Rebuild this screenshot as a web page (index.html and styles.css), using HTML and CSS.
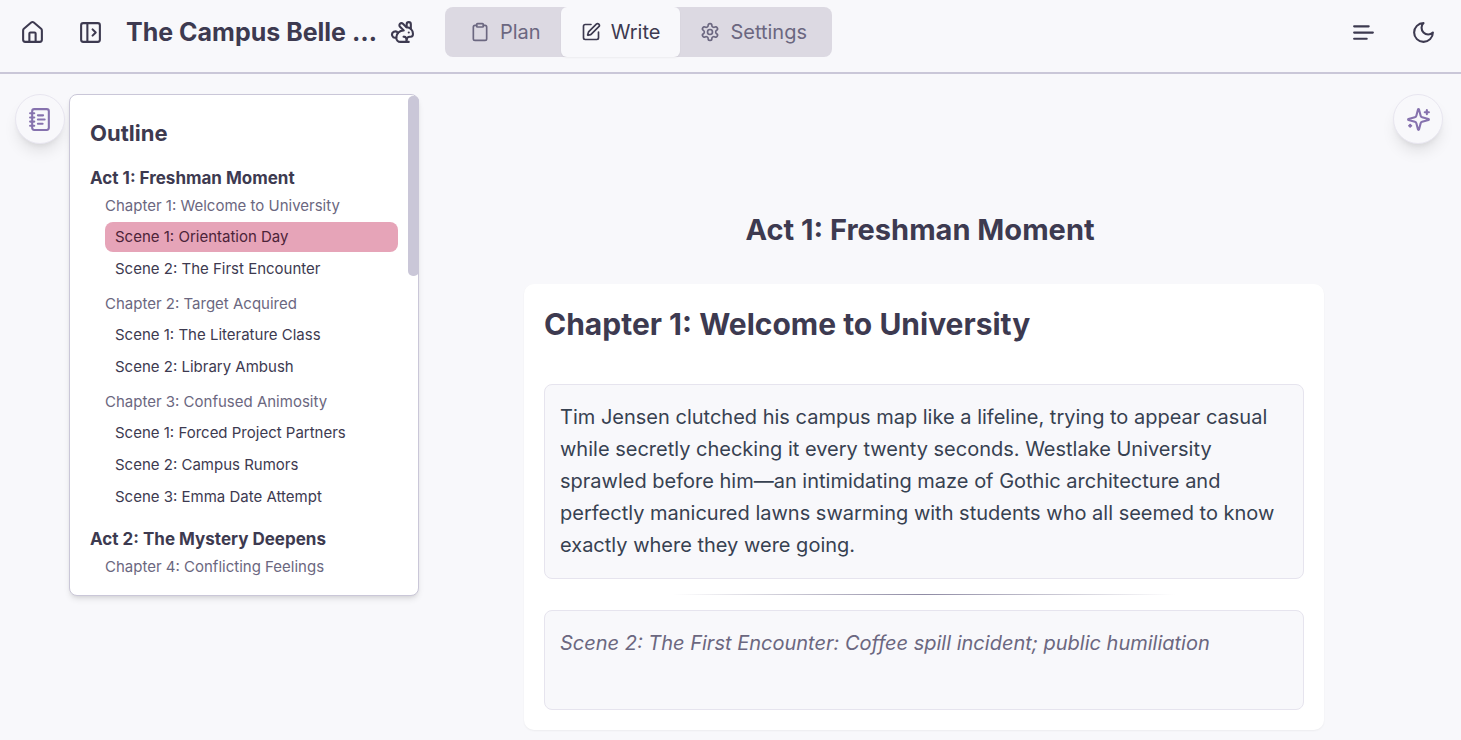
FILE: index.html
```html
<!DOCTYPE html>
<html lang="en">
<head>
<meta charset="utf-8">
<meta name="viewport" content="width=device-width, initial-scale=1">
<title>The Campus Belle</title>
<link rel="stylesheet" href="styles.css">
</head>
<body>
<header class="topbar">
  <div class="topbar-left">
    <button class="icon-btn" type="button" aria-label="Home">
      <svg class="icon" viewBox="0 0 24 24"><path d="M15 21v-8a1 1 0 0 0-1-1h-4a1 1 0 0 0-1 1v8"/><path d="M3 10a2 2 0 0 1 .709-1.528l7-5.999a2 2 0 0 1 2.582 0l7 5.999A2 2 0 0 1 21 10v9a2 2 0 0 1-2 2H5a2 2 0 0 1-2-2z"/></svg>
    </button>
    <button class="icon-btn" type="button" aria-label="Open sidebar">
      <svg class="icon" viewBox="0 0 24 24"><rect width="18" height="18" x="3" y="3" rx="2"/><path d="M9 3v18"/><path d="m14 9 3 3-3 3"/></svg>
    </button>
    <h1 class="story-title">The Campus Belle …</h1>
  </div>
  <button class="icon-btn rabbit" type="button" aria-label="Story assistant">
    <svg class="icon" viewBox="0 0 24 24"><path d="M13 16a3 3 0 0 1 2.24 5"/><path d="M18 12h.01"/><path d="M18 21h-8a4 4 0 0 1-4-4 7 7 0 0 1 7-7h.2L9.6 6.4a1 1 0 1 1 2.8-2.8L15.8 7h.2c3.3 0 6 2.7 6 6v1a2 2 0 0 1-2 2h-1a3 3 0 0 0-3 3"/><path d="M20 8.54V4a2 2 0 1 0-4 0v3"/><path d="M7.612 12.524a3 3 0 1 0-1.6 4.3"/></svg>
  </button>
  <nav class="tabs" aria-label="Views">
    <button class="tab" type="button">
      <svg class="icon icon-sm" viewBox="0 0 24 24"><rect width="8" height="4" x="8" y="2" rx="1"/><path d="M16 4h2a2 2 0 0 1 2 2v14a2 2 0 0 1-2 2H6a2 2 0 0 1-2-2V6a2 2 0 0 1 2-2h2"/></svg>
      Plan
    </button>
    <button class="tab tab-active" type="button" aria-current="page">
      <svg class="icon icon-sm" viewBox="0 0 24 24"><path d="M12 3H5a2 2 0 0 0-2 2v14a2 2 0 0 0 2 2h14a2 2 0 0 0 2-2v-7"/><path d="M18.375 2.625a1 1 0 0 1 3 3l-9.013 9.014a2 2 0 0 1-.853.505l-2.873.84a.5.5 0 0 1-.62-.62l.84-2.873a2 2 0 0 1 .506-.852z"/></svg>
      Write
    </button>
    <button class="tab" type="button">
      <svg class="icon icon-sm" viewBox="0 0 24 24"><path d="M12.22 2h-.44a2 2 0 0 0-2 2v.18a2 2 0 0 1-1 1.73l-.43.25a2 2 0 0 1-2 0l-.15-.08a2 2 0 0 0-2.73.73l-.22.38a2 2 0 0 0 .73 2.73l.15.1a2 2 0 0 1 1 1.72v.51a2 2 0 0 1-1 1.74l-.15.09a2 2 0 0 0-.73 2.73l.22.38a2 2 0 0 0 2.73.73l.15-.08a2 2 0 0 1 2 0l.43.25a2 2 0 0 1 1 1.73V20a2 2 0 0 0 2 2h.44a2 2 0 0 0 2-2v-.18a2 2 0 0 1 1-1.73l.43-.25a2 2 0 0 1 2 0l.15.08a2 2 0 0 0 2.73-.73l.22-.39a2 2 0 0 0-.73-2.73l-.15-.08a2 2 0 0 1-1-1.74v-.5a2 2 0 0 1 1-1.74l.15-.09a2 2 0 0 0 .73-2.73l-.22-.38a2 2 0 0 0-2.73-.73l-.15.08a2 2 0 0 1-2 0l-.43-.25a2 2 0 0 1-1-1.73V4a2 2 0 0 0-2-2z"/><circle cx="12" cy="12" r="3"/></svg>
      Settings
    </button>
  </nav>
  <div class="topbar-right">
    <button class="icon-btn" type="button" aria-label="Text options">
      <svg class="icon" viewBox="0 0 24 24"><path d="M17 6.1H3"/><path d="M21 12.1H3"/><path d="M15.1 18H3"/></svg>
    </button>
    <button class="icon-btn" type="button" aria-label="Dark mode">
      <svg class="icon" viewBox="0 0 24 24"><path d="M12 3a6 6 0 0 0 9 9 9 9 0 1 1-9-9Z"/></svg>
    </button>
  </div>
</header>

<main class="workspace">
  <button class="round-btn" type="button" aria-label="Toggle outline">
    <svg class="icon" viewBox="0 0 24 24"><path d="M2 6h4"/><path d="M2 10h4"/><path d="M2 14h4"/><path d="M2 18h4"/><rect width="16" height="20" x="4" y="2" rx="2"/><path d="M9.5 8h5"/><path d="M9.5 12H16"/><path d="M9.5 16H14"/></svg>
  </button>

  <aside class="outline">
    <span class="scroll-thumb"></span>
    <h2 class="outline-title">Outline</h2>
    <section class="outline-act">
      <a class="act-link" href="#act-1">Act 1: Freshman Moment</a>
      <div class="outline-chapter">
        <a class="chapter-link" href="#chapter-1">Chapter 1: Welcome to University</a>
        <a class="scene-link scene-active" href="#scene-1">Scene 1: Orientation Day</a>
        <a class="scene-link" href="#scene-2">Scene 2: The First Encounter</a>
      </div>
      <div class="outline-chapter">
        <a class="chapter-link" href="#chapter-2">Chapter 2: Target Acquired</a>
        <a class="scene-link" href="#scene-3">Scene 1: The Literature Class</a>
        <a class="scene-link" href="#scene-4">Scene 2: Library Ambush</a>
      </div>
      <div class="outline-chapter">
        <a class="chapter-link" href="#chapter-3">Chapter 3: Confused Animosity</a>
        <a class="scene-link" href="#scene-5">Scene 1: Forced Project Partners</a>
        <a class="scene-link" href="#scene-6">Scene 2: Campus Rumors</a>
        <a class="scene-link" href="#scene-7">Scene 3: Emma Date Attempt</a>
      </div>
    </section>
    <section class="outline-act">
      <a class="act-link" href="#act-2">Act 2: The Mystery Deepens</a>
      <div class="outline-chapter">
        <a class="chapter-link" href="#chapter-4">Chapter 4: Conflicting Feelings</a>
      </div>
    </section>
  </aside>

  <div class="editor">
    <h2 class="act-heading" id="act-1">Act 1: Freshman Moment</h2>
    <article class="chapter-card">
      <h3 class="chapter-heading" id="chapter-1">Chapter 1: Welcome to University</h3>
      <div class="scene" id="scene-1" role="textbox" aria-multiline="true" aria-label="Scene 1" contenteditable="true" spellcheck="false">Tim Jensen clutched his campus map like a lifeline, trying to appear casual while secretly checking it every twenty seconds. Westlake University sprawled before him—an intimidating maze of Gothic architecture and perfectly manicured lawns swarming with students who all seemed to know exactly where they were going.</div>
      <hr class="divider">
      <div class="scene scene-empty" id="scene-2" role="textbox" aria-multiline="true" aria-label="Scene 2" contenteditable="true" spellcheck="false">Scene 2: The First Encounter: Coffee spill incident; public humiliation</div>
    </article>
  </div>

  <button class="round-btn" type="button" aria-label="AI tools">
    <svg class="icon" viewBox="0 0 24 24"><path d="M9.937 15.5A2 2 0 0 0 8.5 14.063l-6.135-1.582a.5.5 0 0 1 0-.962L8.5 9.936A2 2 0 0 0 9.937 8.5l1.582-6.135a.5.5 0 0 1 .963 0L14.063 8.5A2 2 0 0 0 15.5 9.937l6.135 1.581a.5.5 0 0 1 0 .964L15.5 14.063a2 2 0 0 0-1.437 1.437l-1.582 6.135a.5.5 0 0 1-.963 0z"/><path d="M20 3v4"/><path d="M22 5h-4"/><path d="M4 17v2"/><path d="M5 18H3"/></svg>
  </button>
</main>
</body>
</html>
```
FILE: styles.css
```css
:root {
  --bg: #f8f8fb;
  --ink: #3d3a50;
  --muted: #6b6780;
  --line: #cac7d8;
  --accent: #8672ae;
}

* {
  box-sizing: border-box;
}

body {
  margin: 0;
  min-height: 100vh;
  background: var(--bg);
  color: var(--ink);
  font-family: Inter, "Liberation Sans", sans-serif;
  font-size: 20px;
}

h1,
h2,
h3 {
  margin: 0;
  font-weight: 700;
}

button {
  border: 0;
  background: none;
  color: inherit;
  font: inherit;
  padding: 0;
  cursor: pointer;
}

a {
  color: inherit;
  text-decoration: none;
}

.icon {
  display: block;
  flex: none;
  width: 25px;
  height: 25px;
  fill: none;
  stroke: currentColor;
  stroke-width: 2;
  stroke-linecap: round;
  stroke-linejoin: round;
}

.icon-sm {
  width: 20px;
  height: 20px;
}

/* Top bar */
.topbar {
  display: flex;
  align-items: center;
  padding: 7px 15px 15px 10px;
  border-bottom: 2px solid var(--line);
}

.topbar-left {
  display: flex;
  align-items: center;
  gap: 13px;
}

.icon-btn {
  display: grid;
  place-items: center;
  width: 45px;
  height: 45px;
  border-radius: 8px;
}

.story-title {
  width: 256px;
  overflow: hidden;
  font-size: 25px;
  line-height: 35px;
  white-space: nowrap;
  text-overflow: ellipsis;
}

.rabbit {
  width: 25px;
  margin: 0 30px 0 8px;
}

.tabs {
  display: flex;
  padding: 0 5px;
  border-radius: 8px;
  background: #dcd9e2;
  color: var(--muted);
}

.tab {
  display: flex;
  align-items: center;
  gap: 10px;
  height: 50px;
  padding: 0 20px;
  border-radius: 6px;
}

.tab-active {
  background: var(--bg);
  color: var(--ink);
  box-shadow: 0 1px 2px rgba(0, 0, 0, 0.05);
}

.topbar-right {
  display: flex;
  gap: 15px;
  margin-left: auto;
}

/* Workspace */
.workspace {
  display: flex;
  align-items: flex-start;
  padding: 20px 18px 10px 15px;
}

.round-btn {
  display: grid;
  flex: none;
  place-items: center;
  width: 50px;
  height: 50px;
  border: 1px solid #e8e6f0;
  border-radius: 50%;
  background: var(--bg);
  color: var(--accent);
  box-shadow: 0 10px 15px -3px rgba(0, 0, 0, 0.1), 0 4px 6px -4px rgba(0, 0, 0, 0.1);
}

/* Outline panel */
.outline {
  position: relative;
  flex: none;
  width: 350px;
  margin-left: 4px;
  padding: 20px 20px 14px;
  border: 1px solid var(--line);
  border-radius: 8px;
  background: #fff;
  box-shadow: 0 4px 6px -1px rgba(0, 0, 0, 0.1), 0 2px 4px -2px rgba(0, 0, 0, 0.1);
  font-size: 15px;
}

.scroll-thumb {
  position: absolute;
  top: 1px;
  right: -1px;
  width: 11px;
  height: 36%;
  border-radius: 5px;
  background: var(--line);
}

.outline-title {
  margin-bottom: 14px;
  font-size: 22px;
  line-height: 36px;
}

.outline-act + .outline-act {
  margin-top: 14px;
}

.act-link {
  display: block;
  margin-bottom: 4px;
  font-size: 17px;
  font-weight: 700;
  line-height: 26px;
}

.outline-chapter {
  display: flex;
  flex-direction: column;
  gap: 2px;
  padding-left: 15px;
}

.outline-chapter + .outline-chapter {
  margin-top: 9px;
}

.chapter-link {
  margin-bottom: 3px;
  color: var(--muted);
  line-height: 22px;
}

.scene-link {
  padding: 0 10px;
  border-radius: 8px;
  line-height: 30px;
}

.scene-active {
  background: #e6a4b8;
  color: #4c2338;
}

/* Editor */
.editor {
  flex: 1;
  min-width: 0;
  padding-left: 36px;
}

.act-heading {
  margin: 116px 0 34px;
  padding-right: 8px;
  font-size: 29px;
  line-height: 40px;
  text-align: center;
}

.chapter-card {
  max-width: 800px;
  margin: 0 auto;
  padding: 20px;
  border-radius: 10px;
  background: #fff;
  box-shadow: 0 1px 2px rgba(0, 0, 0, 0.05);
}

.chapter-heading {
  margin-bottom: 40px;
  font-size: 30px;
  line-height: 40px;
}

.scene {
  min-height: 100px;
  padding: 16px 15px 17px;
  border: 1px solid #e6e4ee;
  border-radius: 8px;
  background: var(--bg);
  color: #374151;
  line-height: 32px;
}

.scene-empty {
  color: var(--muted);
  font-style: italic;
}

.divider {
  width: 66%;
  height: 1px;
  margin: 15px auto;
  border: 0;
  background: linear-gradient(to right, transparent, #8f8ba4, transparent);
}
```
